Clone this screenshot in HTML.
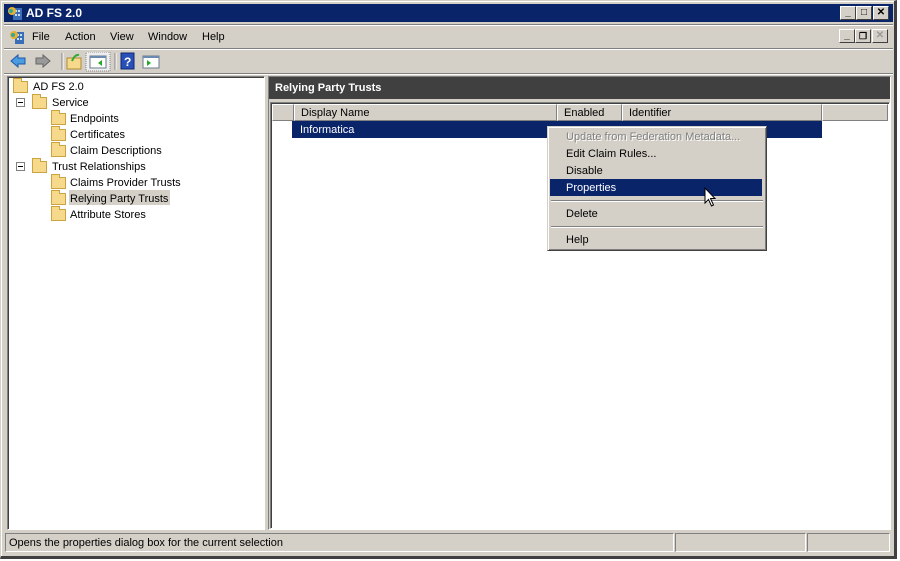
<!DOCTYPE html>
<html><head><meta charset="utf-8"><style>
*{margin:0;padding:0;box-sizing:border-box}
body{width:900px;height:561px;background:#fff;position:relative;overflow:hidden;font-family:"Liberation Sans",Tahoma,sans-serif;font-size:11px;color:#000}
.a{position:absolute}
.win{left:0;top:0;width:897px;height:559px;background:#d4d0c8;border:1px solid #d4d0c8;border-right:3px solid #404040;border-bottom:3px solid #404040;box-shadow:inset 1px 1px 0 #fff}
.title{left:4px;top:4px;width:889px;height:18px;background:#0a246a;color:#fff;font-weight:bold;font-size:12px;line-height:18px;padding-left:22px}
.btn{width:16px;height:14px;background:#d4d0c8;border:1px solid;border-color:#fff #404040 #404040 #fff;font-size:10px;line-height:12px;text-align:center;font-weight:bold;color:#000}
.menu span{position:absolute;top:0}
.ln{position:absolute;height:0;border-top:1px solid #808080;border-bottom:1px solid #fff}
.pane{background:#fff;border:1px solid;border-color:#808080 #fff #fff #808080;box-shadow:inset 1px 1px 0 #404040}
.fold{position:absolute;width:15px;height:12px;background:#f6d98a;border:1px solid #c9a440}
.fold:before{content:"";position:absolute;left:-1px;top:-4px;width:7px;height:3px;background:#f6d98a;border:1px solid #c9a440;border-bottom:none}
.t{position:absolute;white-space:nowrap;margin-top:1px}
.pm{position:absolute;width:9px;height:9px;border:1px solid #808080;background:#fff}
.pm:after{content:"";position:absolute;left:1px;top:3px;width:5px;height:1px;background:#000}
.hd{position:absolute;top:104px;height:17px;background:#d4d0c8;border:1px solid;border-color:#fff #808080 #808080 #fff;line-height:17px;padding-left:6px}
.mi{position:absolute;left:3px;width:212px;height:17px;line-height:19px;padding-left:15px}
</style></head><body>
<div class="a win"></div>
<div class="a title">AD FS 2.0</div>
<svg class="a" style="left:7px;top:5px" width="16" height="16"><rect x="6" y="3" width="9" height="12" fill="#3a6fb8"/><rect x="8" y="5" width="2" height="2" fill="#cde"/><rect x="11" y="5" width="2" height="2" fill="#cde"/><rect x="8" y="9" width="2" height="2" fill="#cde"/><rect x="11" y="9" width="2" height="2" fill="#cde"/><circle cx="5" cy="6" r="4" fill="#e8b030"/><circle cx="4" cy="6" r="2" fill="#3a9"/></svg>
<div class="a btn" style="left:840px;top:6px">_</div>
<div class="a btn" style="left:856px;top:6px">□</div>
<div class="a btn" style="left:873px;top:6px">✕</div>
<div class="ln" style="left:4px;top:24px;width:889px"></div>
<svg class="a" style="left:9px;top:29px" width="16" height="16"><rect x="6" y="3" width="9" height="12" fill="#3a6fb8"/><rect x="8" y="5" width="2" height="2" fill="#cde"/><rect x="11" y="5" width="2" height="2" fill="#cde"/><rect x="8" y="9" width="2" height="2" fill="#cde"/><rect x="11" y="9" width="2" height="2" fill="#cde"/><circle cx="5" cy="6" r="4" fill="#e8b030"/><circle cx="4" cy="6" r="2" fill="#3a9"/></svg>
<div class="a menu" style="left:0;top:31px;width:300px;height:14px">
<span style="left:32px">File</span><span style="left:65px">Action</span><span style="left:110px">View</span><span style="left:148px">Window</span><span style="left:202px">Help</span></div>
<div class="a btn" style="left:839px;top:29px">_</div>
<div class="a btn" style="left:855px;top:29px;font-size:9px">❐</div>
<div class="a btn" style="left:872px;top:29px;color:#999">✕</div>
<div class="ln" style="left:4px;top:48px;width:889px"></div>
<svg class="a" style="left:9px;top:52px" width="160" height="20">
<path d="M2 9 L9 3 V6 H16 V12 H9 V15 Z" fill="#4a9be0" stroke="#1b5aa8"/>
<path d="M41 9 L34 3 V6 H27 V12 H34 V15 Z" fill="#999" stroke="#666"/>
<line x1="53" y1="1" x2="53" y2="18" stroke="#808080"/><line x1="54" y1="1" x2="54" y2="18" stroke="#fff"/>
<rect x="58" y="6" width="14" height="11" fill="#f6d98a" stroke="#b08a30"/><path d="M63 9 Q66 2 70 3" stroke="#3a3" stroke-width="2" fill="none"/>
<rect x="77" y="0" width="24" height="19" fill="#eee" stroke="#888" stroke-dasharray="1 1"/><rect x="81" y="4" width="16" height="12" fill="#fff" stroke="#6a7a8a"/><rect x="81" y="4" width="16" height="2" fill="#6a8ab0"/><path d="M93 8 L89 11 L93 14Z" fill="#2a2"/>
<line x1="106" y1="1" x2="106" y2="18" stroke="#808080"/><line x1="107" y1="1" x2="107" y2="18" stroke="#fff"/>
<rect x="112" y="1" width="13" height="16" fill="#2850b8" stroke="#102870"/><text x="115" y="14" fill="#fff" font-size="12" font-weight="bold" font-family="Liberation Sans">?</text>
<rect x="134" y="4" width="16" height="12" fill="#fff" stroke="#6a7a8a"/><rect x="134" y="4" width="16" height="2" fill="#6a8ab0"/><path d="M138 8 L142 11 L138 14Z" fill="#2a2"/>
</svg>
<div class="ln" style="left:4px;top:73px;width:889px"></div>
<div class="a pane" style="left:7px;top:76px;width:258px;height:454px"></div>
<div class="fold" style="left:13px;top:81px"></div><div class="t" style="left:33px;top:80px">AD FS 2.0</div>
<div class="pm" style="left:16px;top:98px"></div><div class="fold" style="left:32px;top:97px"></div><div class="t" style="left:52px;top:96px">Service</div>
<div class="fold" style="left:51px;top:113px"></div><div class="t" style="left:70px;top:112px">Endpoints</div>
<div class="fold" style="left:51px;top:129px"></div><div class="t" style="left:70px;top:128px">Certificates</div>
<div class="fold" style="left:51px;top:145px"></div><div class="t" style="left:70px;top:144px">Claim Descriptions</div>
<div class="pm" style="left:16px;top:162px"></div><div class="fold" style="left:32px;top:161px"></div><div class="t" style="left:52px;top:160px">Trust Relationships</div>
<div class="fold" style="left:51px;top:177px"></div><div class="t" style="left:70px;top:176px">Claims Provider Trusts</div>
<div class="a" style="left:69px;top:190px;width:101px;height:15px;background:#d4d0c8"></div>
<div class="fold" style="left:51px;top:193px"></div><div class="t" style="left:70px;top:192px">Relying Party Trusts</div>
<div class="fold" style="left:51px;top:209px"></div><div class="t" style="left:70px;top:208px">Attribute Stores</div>
<div class="a" style="left:268px;top:76px;width:623px;height:454px;background:#d4d0c8;border:1px solid;border-color:#808080 #fff #fff #808080"></div>
<div class="a" style="left:269px;top:77px;width:621px;height:22px;background:#404040;color:#fff;font-weight:bold;line-height:23px;padding-left:6px">Relying Party Trusts</div>
<div class="a pane" style="left:270px;top:102px;width:620px;height:427px"></div>
<div class="hd" style="left:272px;width:22px"></div>
<div class="hd" style="left:294px;width:263px">Display Name</div>
<div class="hd" style="left:557px;width:65px">Enabled</div>
<div class="hd" style="left:622px;width:200px">Identifier</div>
<div class="hd" style="left:822px;width:66px"></div>
<div class="a" style="left:292px;top:121px;width:530px;height:17px;background:#0a246a;color:#fff;line-height:18px;padding-left:8px">Informatica</div>
<div class="a" style="left:547px;top:126px;width:220px;height:125px;background:#d4d0c8;border:1px solid;border-color:#d4d0c8 #404040 #404040 #d4d0c8;box-shadow:inset 1px 1px 0 #fff,inset -1px -1px 0 #808080"></div>
<div class="mi" style="left:551px;top:128px;color:#808080;text-shadow:1px 1px 0 #fff">Update from Federation Metadata...</div>
<div class="mi" style="left:551px;top:145px">Edit Claim Rules...</div>
<div class="mi" style="left:551px;top:162px">Disable</div>
<div class="mi" style="left:550px;top:179px;background:#0a246a;color:#fff;padding-left:16px">Properties</div>
<div class="ln" style="left:551px;top:200px;width:212px"></div>
<div class="mi" style="left:551px;top:205px">Delete</div>
<div class="ln" style="left:551px;top:226px;width:212px"></div>
<div class="mi" style="left:551px;top:231px">Help</div>
<svg class="a" style="left:704px;top:187px" width="14" height="22"><path d="M1 1 V16 L4.5 12.5 L7.5 19 L9.5 18 L6.5 11.5 H11 Z" fill="#fff" stroke="#000"/></svg>
<div class="a" style="left:5px;top:533px;width:669px;height:19px;border:1px solid;border-color:#808080 #fff #fff #808080;line-height:19px;padding-left:3px">Opens the properties dialog box for the current selection</div>
<div class="a" style="left:675px;top:533px;width:131px;height:19px;border:1px solid;border-color:#808080 #fff #fff #808080"></div>
<div class="a" style="left:807px;top:533px;width:83px;height:19px;border:1px solid;border-color:#808080 #fff #fff #808080"></div>
</body></html>
